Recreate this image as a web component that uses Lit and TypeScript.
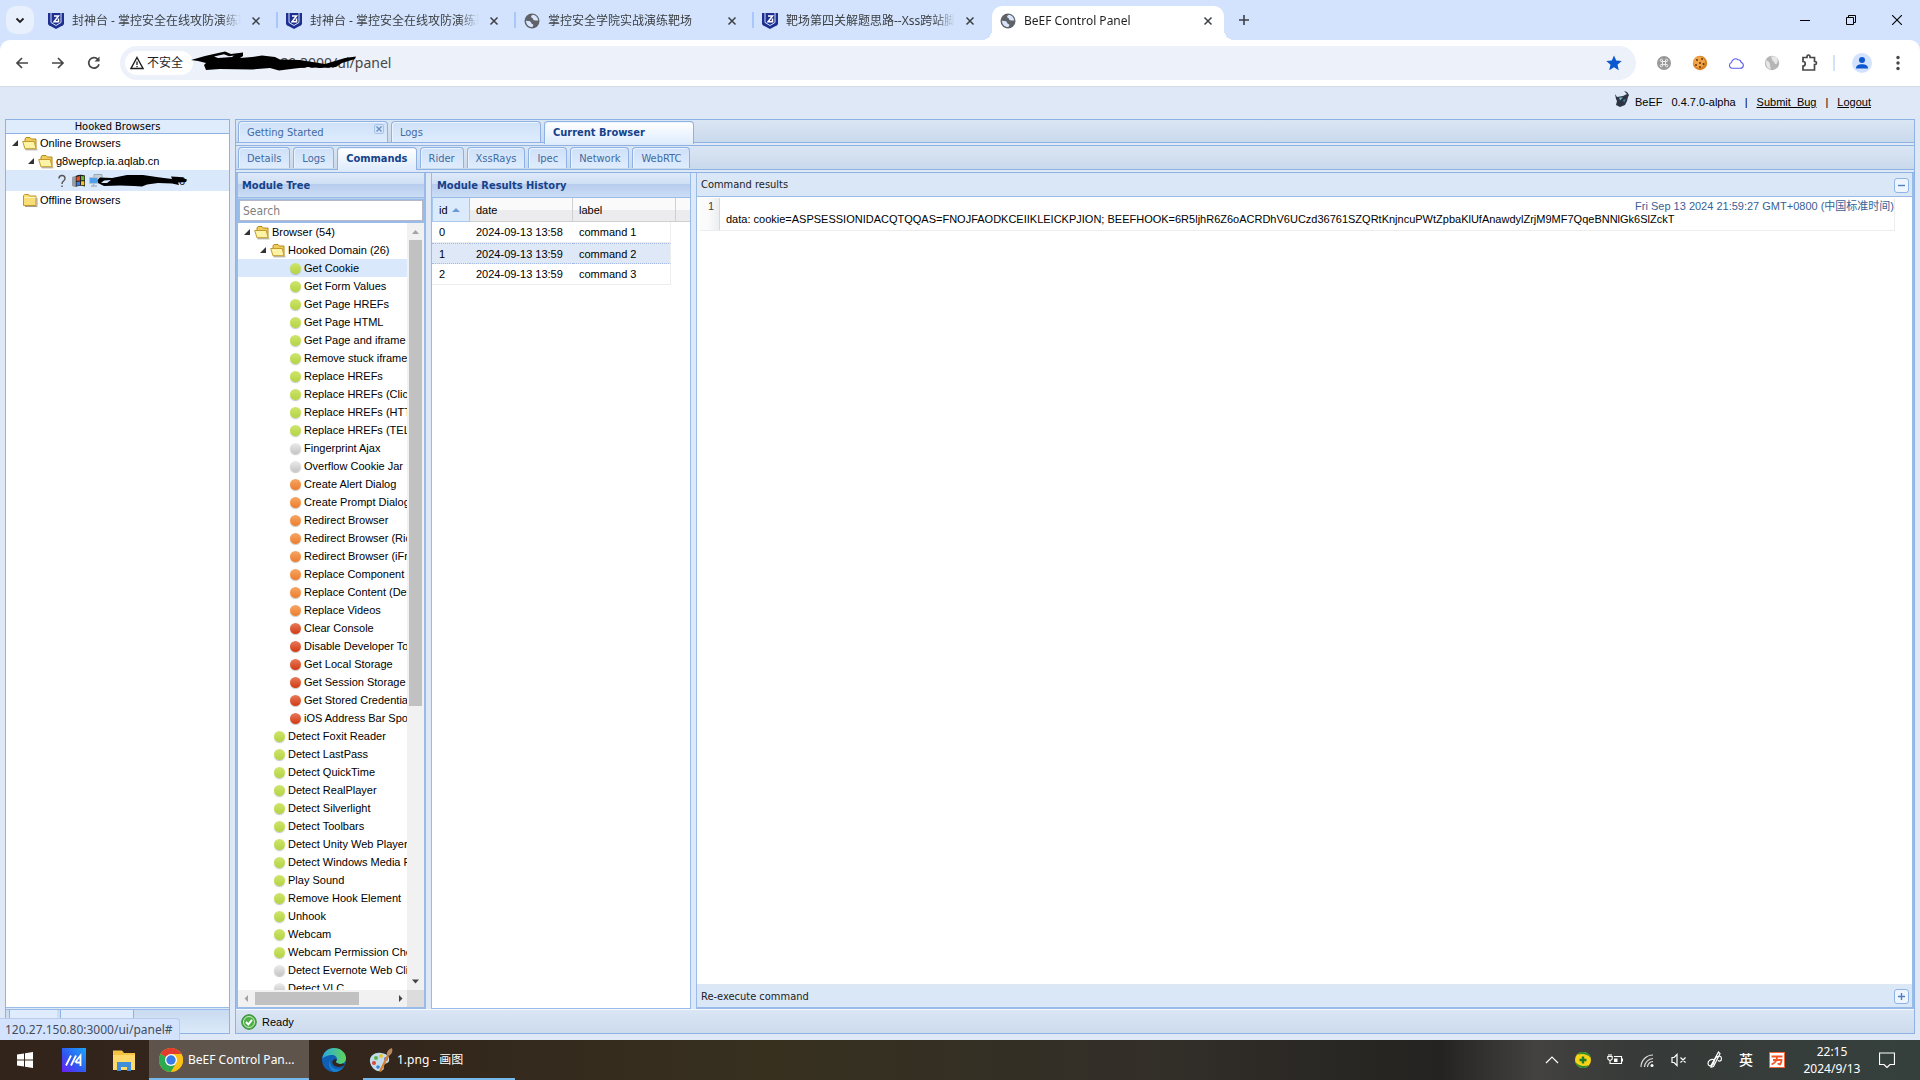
import { LitElement, html, css, svg } from "lit";
import { customElement, state } from "lit/decorators.js";
import { classMap } from "lit/directives/class-map.js";

type Kind = "green" | "grey" | "orange" | "red";

const leaf = (kind: Kind, names: string[]) => names.map((name) => ({ kind, name }));

const HOOKED_DOMAIN = [
  ...leaf("green", [
    "Get Cookie", "Get Form Values", "Get Page HREFs", "Get Page HTML", "Get Page and iframe HTML",
    "Remove stuck iframes", "Replace HREFs", "Replace HREFs (Click Events)", "Replace HREFs (HTTPS)", "Replace HREFs (TEL)",
  ]),
  ...leaf("grey", ["Fingerprint Ajax", "Overflow Cookie Jar"]),
  ...leaf("orange", [
    "Create Alert Dialog", "Create Prompt Dialog", "Redirect Browser", "Redirect Browser (Rickroll)",
    "Redirect Browser (iFrame)", "Replace Component", "Replace Content (Deface)", "Replace Videos",
  ]),
  ...leaf("red", [
    "Clear Console", "Disable Developer Tools", "Get Local Storage", "Get Session Storage",
    "Get Stored Credentials", "iOS Address Bar Spoofing",
  ]),
];

const BROWSER_MODULES = [
  ...leaf("green", [
    "Detect Foxit Reader", "Detect LastPass", "Detect QuickTime", "Detect RealPlayer", "Detect Silverlight",
    "Detect Toolbars", "Detect Unity Web Player", "Detect Windows Media Player", "Play Sound",
    "Remove Hook Element", "Unhook", "Webcam", "Webcam Permission Check",
  ]),
  ...leaf("grey", ["Detect Evernote Web Clipper", "Detect VLC"]),
];

const HISTORY = [
  { id: 0, date: "2024-09-13 13:58", label: "command 1" },
  { id: 1, date: "2024-09-13 13:59", label: "command 2" },
  { id: 2, date: "2024-09-13 13:59", label: "command 3" },
];

const SUB_TABS = ["Details", "Logs", "Commands", "Rider", "XssRays", "Ipec", "Network", "WebRTC"];

const icon = (size: number, body: unknown, box = size) =>
  html`<svg class="icon" width=${size} height=${size} viewBox="0 0 ${box} ${box}" aria-hidden="true">${body}</svg>`;

const shield = icon(16, svg`
  <path d="M0 0h16v10.500q0 1-1 1.700L8 16l-7-3.800Q0 11.500 0 10.500z" fill="#1e2f8f"/>
  <path d="M3 0v9.500l5 3 5-3V0" fill="none" stroke="#d3e3fd" stroke-width="1"/>
  <path d="M6 3h4.500L6 8.800h4.500V5.500" fill="none" stroke="#fff" stroke-width="1.500"/>`);
const globe = icon(16, svg`
  <circle cx="8" cy="8" r="7.500" fill="#5f6368"/>
  <path d="M9.200 1.800C6.500 2.500 6.800 4.500 8.200 5c1.500.4.300 2 1.800 2.300 1.500.3 3 .2 4.200.2C14 4.800 12 2.200 9.200 1.800zM2 7.500c1.500.8 4 .3 4.800 1.500.6 1 .7 2 2 2.200 1 .2.500 1.800-.5 2.900C4.500 14.200 2 11.500 2 7.500z" fill="#d9e5fb"/>`);
const cross = icon(10, svg`<path d="M1.500 1.500l7 7m0-7l-7 7" stroke="#3c4043" stroke-width="1.500"/>`);
const folderOpen = icon(16, svg`
  <path d="M3 12.500V4l1-1.500h4L9.500 4H14v9.500H4z" fill="#f0cd5a" stroke="#b58a1c"/>
  <path d="M.7 6.500h11.500l2 7.300H3z" fill="#fdf3a6" stroke="#c39a2c"/>
  <path d="M3.500 14.800h12" stroke="#a79f8c"/>`);
const folder = icon(16, svg`
  <path d="M1.500 3.500l1-1h4l1 1.500h6.500v9.500H1.500z" fill="#f9de76" stroke="#c1962a"/>
  <path d="M2.500 5.500h11" stroke="#fff6c0"/><path d="M3 14.500h12V6" stroke="#a79f8c" fill="none"/>`);
const arrow = icon(16, svg`<path d="M12 5v6H6z" fill="#333"/>`);

@customElement("app-root")
export class AppRoot extends LitElement {
  @state() private subTab = "Commands";
  @state() private selectedRow = 1;
  @state() private selectedModule = "Get Cookie";

  static styles = css`
    :host {
      display: flex; flex-direction: column; height: 100vh; overflow: hidden;
      background: #dfe8f6; color: #000;
      font: 11px/18px "Liberation Sans", Arial, "Noto Sans CJK SC", sans-serif;
    }
    * { box-sizing: border-box; }
    button, input { font: inherit; color: inherit; border: 0; padding: 0; margin: 0; background: none; }
    a { color: inherit; }
    svg { display: block; flex: none; }
    ul { list-style: none; margin: 0; padding: 0; }
    .grow { flex: 1; min-width: 0; }

    .ui { font-family: "Noto Sans", "Noto Sans CJK SC", sans-serif; }
    .tabstrip { display: flex; height: 40px; background: #d3e3fd; font-size: 12px; padding: 6px 0 0 6px; color: #3c4043; }
    .tabsearch { width: 28px; height: 28px; border-radius: 10px; background: #e9f0fd; display: grid; place-items: center; margin-right: 6px; }
    .btab { display: flex; align-items: center; width: 238px; height: 34px; padding: 0 17px 5px 8px; position: relative; }
    .btab .title { flex: 1; min-width: 0; margin: 0 10px 0 8px; overflow: hidden; white-space: nowrap; text-align: left; line-height: 20px;
      -webkit-mask: linear-gradient(to right, #000 88%, transparent); mask: linear-gradient(to right, #000 88%, transparent); }
    .btab.line::after { content: ""; position: absolute; right: 0; top: 6px; height: 16px; width: 2px; background: #a8c7fa; }
    .btab.active { width: 232px; padding-right: 11px; background: #fff; border-radius: 10px 10px 0 0; color: #1f1f1f; }
    .btab.active::before, .btab.active::after { content: ""; position: absolute; bottom: 0; width: 10px; height: 10px; }
    .btab.active::before { left: -10px; background: radial-gradient(circle at 0 0, transparent 10px, #fff 10px); }
    .btab.active::after { right: -10px; background: radial-gradient(circle at 100% 0, transparent 10px, #fff 10px); }
    .newtab { width: 36px; height: 28px; display: grid; place-items: center; margin-left: 2px; }
    .win { width: 46px; height: 28px; display: grid; place-items: center; }

    .toolbar { display: flex; align-items: center; height: 47px; background: #fff; border-bottom: 1px solid #d5dbe4; padding: 0 14px; border-radius: 10px 10px 0 0; }
    .corner { background: #d3e3fd; }
    .nav { display: flex; gap: 20px; margin-right: 18px; }
    .nav button { width: 16px; height: 16px; }
    .omni { display: flex; align-items: center; height: 34px; border-radius: 17px; background: #ecf1fa; padding: 0 14px 0 5px; position: relative; }
    .chip { display: flex; align-items: center; gap: 3px; height: 24px; width: 68px; border-radius: 12px; background: #fff; padding-left: 5px; font-size: 12px; color: #1f1f1f; }
    .url { flex: 1; min-width: 0; margin-left: 12px; font-size: 14px; color: #474747; }
    .scrub { position: absolute; left: 70px; top: 4px; }
    .exts { display: flex; align-items: center; gap: 20px; margin-left: 20px; }
    .bar { width: 2px; height: 16px; background: #d3e3fd; margin-left: -5px; }
    .exts .me { margin: 0 -2px 0 -3px; }

    .beef { display: flex; justify-content: flex-end; height: 32px; padding: 0 49px 2px 0; align-items: center; gap: 9px; }
    .beef svg { margin-bottom: 6px; margin-right: -4px; }

    .work { flex: 1; min-height: 0; display: flex; gap: 5px; padding: 0 5px 6px 5px; }
    .side { width: 225px; display: flex; flex-direction: column; border: 1px solid #8db2e3; background: #fff; }
    .side h2 { margin: 0; height: 14px; line-height: 14px; font-size: 11px; font-weight: 400; text-align: center; background: #dfecfb; border-bottom: 1px solid #8db2e3; }
    .side .tree { flex: 1; }
    .sidefoot { height: 26px; display: flex; background: linear-gradient(#c9dbf1, #dbe9f9); border-top: 3px double #99bbe8; }
    .sidefoot span { background: #deecfd; border-left: 1px solid #8db2e3; margin-left: 3px; }
    .sidefoot span:first-child { width: 48px; }
    .sidefoot span:last-child { width: 74px; border-right: 1px solid #8db2e3; }

    .row { display: flex; align-items: center; height: 18px; white-space: nowrap; cursor: pointer; }
    .row.on { background: #d9e8fb; }
    .row.host { height: 21px; padding-left: 48px; position: relative; gap: 1px; }
    .row span { margin-left: 2px; }
    .row .dot { flex: none; width: 11px; height: 11px; margin: 1px 1px 0 4px; border-radius: 50%; box-shadow: 0 1px 1px rgba(0, 0, 0, .22); }
    .green { background: linear-gradient(#cfe56b, #b3d443); }
    .grey { background: linear-gradient(#ebebeb, #c4c4c4); }
    .orange { background: linear-gradient(#f7a763, #ec7c2c); }
    .red { background: linear-gradient(#e87a5a, #d13a12); }
    .l2 { padding-left: 16px; } .l2leaf { padding-left: 32px; } .l3 { padding-left: 48px; }
    .l0leaf { padding-left: 16px; }
    .scrub2 { position: absolute; left: 91px; top: 4px; }
    .host .tail { margin-left: 74px; }

    .main { flex: 1; min-width: 0; display: flex; flex-direction: column; border: 1px solid #8db2e3; }
    .tabs { display: flex; gap: 3px; height: 23px; padding: 1px 2px 0; background: linear-gradient(#dbe6f4, #c9d9ec); border-bottom: 1px solid #8db2e3; }
    .tabs.sub { margin-top: 2px; height: 25px; border-top: 1px solid #8db2e3; }
    .tahoma { font-family: Tahoma, "DejaVu Sans Condensed", "Noto Sans", sans-serif; font-size: 11px; }
    .tab { display: flex; justify-content: space-between; height: 21px; line-height: 22px; padding: 0 8px; color: #416aa3; white-space: nowrap; cursor: pointer;
      border: 1px solid #8db2e3; border-bottom: 0; border-radius: 4px 4px 0 0; background: linear-gradient(#cfe1f8, #deecfd); box-shadow: inset 1px 1px 0 #eaf3fe; }
    .top .tab { width: 150px; }
    .tab.sel { height: 23px; color: #15428b; font-weight: 700; background: linear-gradient(#fff, #deecfd); }
    .tabclose { width: 10px; height: 10px; margin: 2px -5px 0 0; border: 1px solid #a8c3e8; border-radius: 2px; display: grid; place-items: center; }

    .cols { flex: 1; min-height: 0; display: flex; margin-top: 2px; border-top: 1px solid #8db2e3; }
    .panel { display: flex; flex-direction: column; border: 1px solid #99bbe8; border-top: 0; background: #fff; min-width: 0; min-height: 0; }
    .panel h2 { margin: 0; height: 25px; line-height: 26px; padding-left: 5px; font-size: 11px; font-weight: 700; color: #15428b;
      border-bottom: 1px solid #99bbe8; background: linear-gradient(#dfeaf9 0, #cfdff4 46%, #b8cdee 48%, #cbdef6 100%); }
    .modules { width: 190px; border-width: 0 2px 2px; margin-right: 5px; }
    .modules h2 { padding-left: 4px; }
    .find { width: 100%; height: 25px; background: #99bbe8; border-top: 1px solid #b8cfee; padding: 1px 1px 3px 1px; }
    .find input { display: block; width: 100%; height: 21px; padding: 0 3px; font-size: 12px; background: #fff; border: 1px solid #b5b8c8; }
    .find input::placeholder { color: #808080; opacity: 1; }
    .scrollarea { flex: 1; min-height: 0; display: grid; grid-template: minmax(0, 1fr) 17px / minmax(0, 1fr) 17px; }
    .scrollarea .tree { overflow: hidden; }
    .vbar { background: #f1f1f1; display: flex; flex-direction: column; align-items: center; }
    .vbar .thumb { width: 13px; height: 466px; background: #c1c1c1; }
    .hbar { background: #f1f1f1; display: flex; align-items: center; }
    .hbar .thumb { height: 13px; width: 104px; background: #c1c1c1; }
    .nook { background: #dcdcdc; }

    .history { width: 260px; margin-right: 5px; }
    table { border-collapse: separate; border-spacing: 0; table-layout: fixed; }
    .fill { width: 14px; }
    th { height: 24px; text-align: left; font-weight: 400; padding: 0 6px; border-right: 1px solid #d0d0d0; border-bottom: 1px solid #d0d0d0; }
    th:last-child { border-right: 0; }
    thead tr { background: linear-gradient(#fafafa 48%, #ececee 52%); }
    th.sorted { background: #dcebfc; border: 1px solid #a9c8ee; border-top: 0; padding-left: 6px; }
    th .s { display: inline-block; border: 4px solid transparent; border-top: 0; border-bottom-color: #6a9bd8; margin-left: 4px; vertical-align: 2px; }
    td { height: 21px; padding: 0 6px; border-bottom: 1px solid #ededed; line-height: 18px; white-space: nowrap; }
    td:first-child { padding-left: 7px; }
    tr.on td { background: #dfe8f6; border-top: 1px dotted #a3bae9; border-bottom: 1px dotted #a3bae9; }
    tbody td:nth-child(3) { border-right: 1px solid #ededed; }
    tbody td.pad { background: #fff; border: 0; padding: 0; }
    .c0 { width: 38px; } .c1 { width: 103px; } .c2 { width: 98px; } .c3 { width: 5px; } .c4 { width: 14px; }

    .results { flex: 1; border-width: 0 2px 2px 1px; }
    .cap { display: flex; align-items: center; height: 24px; padding: 1px 3px 0 4px; background: #dae7f6; color: #222; border-bottom: 1px solid #99bbe8; }
    .cap.foot { border-bottom: 0; border-top: 1px solid #dfe8f2; height: 23px; }
    .tool { width: 15px; height: 15px; border: 1px solid #8fb4e6; border-radius: 3px; background: #eef5fe; display: grid; place-items: center; }
    .out { flex: 1; padding: 1px 17px 0 3px; }
    .outrow { display: flex; height: 33px; border-bottom: 1px solid #ededed; border-right: 1px solid #ededed; }
    .num { width: 20px; padding-right: 5px; text-align: right; color: #444; background: linear-gradient(to right, #fbfbfb 40%, #eceef0); border-right: 1px solid #d8d8d8; line-height: 16px; }
    .body { flex: 1; min-width: 0; padding-left: 6px; display: flex; flex-direction: column; }
    .when { align-self: flex-end; line-height: 16px; color: #385f95; }
    .data { line-height: 11px; white-space: nowrap; }
    .ready { display: flex; align-items: center; gap: 5px; height: 24px; padding-left: 5px; border-top: 1px solid #f4f8fd; background: linear-gradient(#dae6f4, #cddbee); }

    .link { position: absolute; left: 0; bottom: 40px; height: 22px; line-height: 22px; padding: 0 6px 0 5px; font-size: 12px; color: #444d5c; background: #d3e3fd; border: 1px solid #b9cbe8; border-left: 0; border-bottom: 0; border-radius: 0 4px 0 0; }

    .task { display: flex; align-items: center; height: 40px; color: #fff; font-size: 12px;
      background: linear-gradient(to right, #33241b 0, #33261c 20%, #37301f 40%, #332f29 60%, #242321 75%, #434241 80%, #373a38 85%, #35403d 100%); }
    .task button { display: flex; align-items: center; justify-content: center; height: 40px; color: #fff; }
    .task .w { width: 50px; }
    .task .w:first-child { width: 49px; }
    .task .app { justify-content: flex-start; gap: 5px; white-space: nowrap; border-bottom: 2px solid #76b9ed; border-top: 2px solid transparent; }
    .task .chrome { width: 160px; padding-left: 10px; background: #5f544c; border-top-color: #5f544c; }
    .task .paint { width: 152px; padding-left: 6px; gap: 4px; margin-left: 4px; }
    .tray { display: flex; align-items: center; gap: 14px; margin-left: auto; padding-right: 25px; }
    .trayicons { display: flex; align-items: center; gap: 16px; margin-right: 4px; }
    .ime { font-size: 14px; width: 16px; font-weight: 500; }
    .clock { width: 66px; text-align: center; line-height: 17px; white-space: nowrap; }
  `;

  private leafRow(item: { kind: Kind; name: string }, level: string) {
    return html`<li class=${classMap({ row: true, [level]: true, on: item.name === this.selectedModule })}
      @click=${() => (this.selectedModule = item.name)}><i class="dot ${item.kind}"></i><span>${item.name}</span></li>`;
  }

  private browserTab(fav: unknown, title: string, kind = "") {
    return html`<div class="btab ${kind}">${fav}<span class="title">${title}</span>
      <button aria-label="Close tab">${cross}</button></div>`;
  }

  private chromeBar() {
    return html`
      <header class="ui">
        <div class="tabstrip">
          <button class="tabsearch" aria-label="Search tabs">${icon(10, svg`<path d="M1.500 3.500L5 7l3.500-3.500" fill="none" stroke="#1f1f1f" stroke-width="1.800"/>`)}</button>
          ${this.browserTab(shield, "封神台 - 掌控安全在线攻防演练靶场", "line")}
          ${this.browserTab(shield, "封神台 - 掌控安全在线攻防演练靶场", "line")}
          ${this.browserTab(globe, "掌控安全学院实战演练靶场", "line")}
          ${this.browserTab(shield, "靶场第四关解题思路--Xss跨站脚本攻击")}
          ${this.browserTab(globe, "BeEF Control Panel", "active")}
          <button class="newtab" aria-label="New tab">${icon(12, svg`<path d="M6 1v10M1 6h10" stroke="#3c4043" stroke-width="1.600"/>`)}</button>
          <div class="grow"></div>
          <button class="win" aria-label="Minimize">${icon(10, svg`<path d="M0 5.500h10" stroke="#000"/>`)}</button>
          <button class="win" aria-label="Restore">${icon(10, svg`<path d="M.5 2.500h7v7h-7zM2.500 2.500v-2h7v7h-2" fill="none" stroke="#000"/>`)}</button>
          <button class="win" aria-label="Close">${icon(10, svg`<path d="M0 0l10 10M10 0L0 10" stroke="#000" stroke-width="1.100"/>`)}</button>
        </div>
        <div class="corner"><div class="toolbar">
          <nav class="nav">
            <button aria-label="Back">${icon(16, svg`<path d="M14 8H3M8 3L3 8l5 5" fill="none" stroke="#474747" stroke-width="1.700"/>`)}</button>
            <button aria-label="Forward">${icon(16, svg`<path d="M2 8h11M8 3l5 5-5 5" fill="none" stroke="#474747" stroke-width="1.700"/>`)}</button>
            <button aria-label="Reload">${icon(16, svg`<path d="M13 9.200A5.200 5.200 0 1 1 11.800 4.400L13 5.800" fill="none" stroke="#474747" stroke-width="1.700"/><path d="M13.500 1.500v5h-5z" fill="#474747"/>`)}</button>
          </nav>
          <div class="omni grow">
            <div class="chip">${icon(14, svg`<path d="M7 1.500L13 12.500H1z" fill="none" stroke="#1f1f1f" stroke-width="1.400"/><path d="M7 5.500v3.500M7 10v1.300" stroke="#1f1f1f" stroke-width="1.300"/>`)}不安全</div>
            <input class="url" aria-label="Address" .value=${"120.27.150.80:3000/ui/panel"} />
            <svg class="scrub" width="170" height="24" viewBox="190 50 170 24" aria-hidden="true">
              <path d="M191 60L205 56 225 51.500 231 54 243 52.500V56L240 58 252 57 262 55.500 275 57 280 59.500 300 60 325 64 345 58 356 56.500 355 59 342 63 336 67 320 68 308 67 295 68.500 279 70.500 270 68 252 69.500 220 69 206 70 204 65 206 63 198 61z" fill="#000"/>
              <path d="M214 56.500l10-2.300 5 2 5-.7-2 1.500-14 1z" fill="#ecf1fa"/>
            </svg>
            ${icon(16, svg`<path d="M8 .5l2.200 5.100 5.500.5-4.200 3.600 1.300 5.500L8 12.300l-4.800 2.900 1.300-5.500L.3 6.100l5.500-.5z" fill="#0b57d0"/>`)}
          </div>
          <div class="exts">
            ${icon(16, svg`<circle cx="8" cy="8" r="7" fill="#999"/><path d="M6.500 6.500h3v3h-3zM6.500 6.500H5A1.200 1.200 0 1 1 6.500 5zM9.500 6.500V5A1.200 1.200 0 1 1 11 6.500zM9.500 9.500H11A1.200 1.200 0 1 1 9.500 11zM6.500 9.500V11A1.200 1.200 0 1 1 5 9.500z" fill="none" stroke="#eee"/>`)}
            ${icon(16, svg`<circle cx="8" cy="8" r="7.200" fill="#d98021"/><circle cx="7" cy="7" r="5.800" fill="#f0a646"/><g fill="#6b3410"><circle cx="5" cy="5" r="1"/><circle cx="10" cy="4" r="1"/><circle cx="8" cy="8" r="1"/><circle cx="4" cy="10" r="1"/><circle cx="11.500" cy="9" r="1"/><circle cx="8" cy="12" r="1"/></g>`)}
            ${icon(16, svg`<path d="M4 13.300h8.500a3 3 0 0 0 .6-5.900A3 3 0 0 0 10 4.700 4 4 0 0 0 3.500 7.500 3 3 0 0 0 4 13.300z" fill="none" stroke="#5b5bf0" stroke-width="1.100"/>`)}
            ${icon(16, svg`<circle cx="8" cy="8" r="7.200" fill="#b5b5b5"/><path d="M6 2c3 0 1 3 3 4s1 3 3 3 2-4 1-6-4-2-7-1zM2 5c2 1 5 3 4 6l1 3C3 14 1 9 2 5z" fill="#e6e6e6"/>`)}
            ${icon(18, svg`<path d="M3 3.500h4V2.500a1.500 1.500 0 0 1 3 0v1h4.500v4h.5a1.500 1.500 0 0 1 0 3h-.5v5.500H3v-4a2 2 0 0 0 0-4.500z" fill="none" stroke="#474747" stroke-width="1.700"/>`)}
            <div class="bar"></div>
            <button class="me" aria-label="Profile">${icon(20, svg`<circle cx="10" cy="10" r="10" fill="#d3e3fd"/><circle cx="10" cy="7" r="3" fill="#0b57d0"/><path d="M4 15.500c0-3 2.500-4.300 6-4.300s6 1.300 6 4.300z" fill="#0b57d0"/>`)}</button>
            <button aria-label="Menu">${icon(16, svg`<g fill="#474747"><circle cx="8" cy="2.500" r="1.700"/><circle cx="8" cy="8" r="1.700"/><circle cx="8" cy="13.500" r="1.700"/></g>`)}</button>
          </div>
        </div></div>
      </header>`;
  }

  private sidebar() {
    return html`
      <aside class="side">
        <h2 class="tahoma">Hooked Browsers</h2>
        <ul class="tree">
          <li class="row">${arrow}${folderOpen}<span>Online Browsers</span></li>
          <li class="row l2">${arrow}${folderOpen}<span>g8wepfcp.ia.aqlab.cn</span></li>
          <li class="row host on">
            ${icon(16, svg`<path d="M5 5.500Q5 2.500 8 2.500T11 5.500Q11 7 9 8.500 8 9.300 8 11M8 12.500v1.600" fill="none" stroke="#555" stroke-width="1.400"/>`)}
            ${icon(16, svg`<path d="M1 4l3-1v11l-3-1z" fill="#555" opacity=".5"/><path d="M4.500 3Q9 1 14 2.500v11Q9 12 4.500 14z" fill="#222"/><path d="M5.500 4l3.500-1v4.500l-3.500.5z" fill="#e2502a"/><path d="M10 3l3.300.2v4H10z" fill="#6fb33c"/><path d="M5.500 9l3.500-.5v3.700l-3.500.6z" fill="#3f7fd6"/><path d="M10 8.300h3.300v4L10 12z" fill="#f2c230"/>`)}
            ${icon(16, svg`<path d="M6 1.500h8v8H6z" fill="#c7cfd8" stroke="#9aa7b5"/><path d="M1.500 4.500h8v6h-8z" fill="#4fa0ea" stroke="#b4c3d3"/><path d="M3 13h6M5.500 11v2" stroke="#a6b4c2" stroke-width="1.500"/>`)}
            <span class="tail">6</span>
            <svg class="scrub2" width="92" height="14" viewBox="97 175 92 14" aria-hidden="true">
              <path d="M104 187L98 184 97.500 181 100 178.500 112 179 127 176 143 176 160 178.500 172 180 171 177.500 180 178 187 180.500 186 183 178 183.500 179 186 172 184.500 158 184 147 185.500 142 187.500 134 187 120 186.500z" fill="#000"/>
              <path d="M101 184l3-2.500 7-.5-4 3z" fill="#d9e8fb"/>
            </svg>
          </li>
          <li class="row l0leaf">${folder}<span>Offline Browsers</span></li>
        </ul>
        <div class="sidefoot"><span></span><span></span></div>
      </aside>`;
  }

  private modules() {
    return html`
      <section class="panel modules">
        <h2 class="tahoma">Module Tree</h2>
        <div class="find tahoma"><input type="text" placeholder="Search" aria-label="Search modules" /></div>
        <div class="scrollarea">
          <ul class="tree">
            <li class="row">${arrow}${folderOpen}<span>Browser (54)</span></li>
            <li class="row l2">${arrow}${folderOpen}<span>Hooked Domain (26)</span></li>
            ${HOOKED_DOMAIN.map((m) => this.leafRow(m, "l3"))}
            ${BROWSER_MODULES.map((m) => this.leafRow(m, "l2leaf"))}
          </ul>
          <div class="vbar">
            ${icon(17, svg`<path d="M5 11h7L8.500 7z" fill="#a3a3a3"/>`)}
            <div class="thumb"></div><div class="grow"></div>
            ${icon(17, svg`<path d="M5 6.500h7l-3.500 4z" fill="#444"/>`)}
          </div>
          <div class="hbar">
            ${icon(17, svg`<path d="M10 5v7L6.500 8.500z" fill="#a3a3a3"/>`)}
            <div class="thumb"></div><div class="grow"></div>
            ${icon(17, svg`<path d="M9 5v7l3.500-3.500z" fill="#444"/>`)}
          </div>
          <div class="nook"></div>
        </div>
      </section>`;
  }

  private history() {
    return html`
      <section class="panel history">
        <h2 class="tahoma">Module Results History</h2>
        <table>
          <colgroup><col class="c0" /><col class="c1" /><col class="c2" /><col class="c3" /><col class="c4" /></colgroup>
          <thead><tr><th class="sorted">id<i class="s"></i></th><th>date</th><th colspan="2">label</th><th></th></tr></thead>
          <tbody>
            ${HISTORY.map((r, i) => html`
              <tr class=${i === this.selectedRow ? "on" : ""} @click=${() => (this.selectedRow = i)}>
                <td>${r.id}</td><td>${r.date}</td><td>${r.label}</td><td class="pad" colspan="2"></td>
              </tr>`)}
          </tbody>
        </table>
      </section>`;
  }

  private results() {
    return html`
      <section class="panel results">
        <div class="cap tahoma"><span class="grow">Command results</span>
          <button class="tool" aria-label="Collapse">${icon(7, svg`<path d="M0 3.500h7" stroke="#4f7fc0" stroke-width="1.400"/>`)}</button></div>
        <div class="out">
          <div class="outrow">
            <div class="num">1</div>
            <div class="body">
              <time class="when">Fri Sep 13 2024 21:59:27 GMT+0800 (中国标准时间)</time>
              <div class="data">data: cookie=ASPSESSIONIDACQTQQAS=FNOJFAODKCEIIKLEICKPJION; BEEFHOOK=6R5ljhR6Z6oACRDhV6UCzd36761SZQRtKnjncuPWtZpbaKlUfAnawdylZrjM9MF7QqeBNNlGk6SlZckT</div>
            </div>
          </div>
        </div>
        <div class="cap foot tahoma"><span class="grow">Re-execute command</span>
          <button class="tool" aria-label="Expand">${icon(7, svg`<path d="M0 3.500h7M3.500 0v7" stroke="#4f7fc0" stroke-width="1.400"/>`)}</button></div>
      </section>`;
  }

  private taskbar() {
    return html`
      <footer class="task ui">
        <button class="w" aria-label="Start">${icon(16, svg`<path d="M0 2.500L7 1.500v6H0zM8 1.300L16 0v7.500H8zM0 8.500h7v6l-7-1zM8 8.500h8V16l-8-1.200z" fill="#fff"/>`)}</button>
        <button class="w" aria-label="MyASUS">${icon(24, svg`
          <defs><linearGradient id="asus" x1="0" y1="1" x2="1" y2="0"><stop offset="0" stop-color="#6a1cf5"/><stop offset=".45" stop-color="#2f5bf0"/><stop offset="1" stop-color="#18a6fb"/></linearGradient></defs>
          <path d="M0 0h24v24H0z" fill="url(#asus)"/><path d="M4 17.500L9 7.500M9 17.500L14 7.500M13 14.500l5.500-7v10.500M14 14.500h4.500" fill="none" stroke="#fff" stroke-width="1.800"/>`)}</button>
        <button class="w" aria-label="File Explorer">${icon(24, svg`<path d="M1 2.500h9l2 2.500h11v17H1z" fill="#f5c342"/><path d="M1 7h22v15H1z" fill="#ffd96b"/><path d="M5 14h14v9h-4v-4H9v4H5z" fill="#3e8fd8"/>`)}</button>
        <button class="app chrome">${icon(24, svg`
          <circle cx="12" cy="12" r="12" fill="#fbc116"/>
          <path d="M12 12L1.600 6A12 12 0 0 1 22.400 6z" fill="#e33b2e"/>
          <path d="M12 12L1.600 6A12 12 0 0 0 12 24l5.200-9z" fill="#2da94f"/>
          <path d="M12 6h10.400a12 12 0 0 1 0 12L12 24l5.200-9z" fill="#fbc116"/>
          <circle cx="12" cy="12" r="6" fill="#fff"/><circle cx="12" cy="12" r="4.700" fill="#3a7bea"/>`)}BeEF Control Pan...</button>
        <button class="w" aria-label="Edge">${icon(24, svg`
          <defs><linearGradient id="edge" x1="0" y1="0" x2="1" y2="0"><stop offset="0" stop-color="#2aa7e0"/><stop offset="1" stop-color="#5fd65a"/></linearGradient></defs>
          <circle cx="12" cy="12" r="12" fill="#0f5fb3"/>
          <path d="M.2 10.500C1.500 4 6 0 12 0c7 0 12 5 12 10 0 3.500-2.500 6-6 6-2.500 0-4-1-4-2s1-1.200 1-3-2-4-5-4c-4 0-8 2-9.800 3.500z" fill="url(#edge)"/>
          <path d="M8.500 11.500c-2 5 2 9.500 7 10 2.500 0 5-1 6.500-3A12 12 0 0 1 12 24C8 22 5 17 8.500 11.500z" fill="#1b7fd0"/>
          <path d="M14.800 11.500c-.3 1.500-1 1.500-.8 2.500.3 1.500 4 2.500 7 1.500l2 1c-3 3-9.500 3.500-12 0-2-3 .5-6 3.800-5z" fill="#33241b"/>`)}</button>
        <button class="app paint">${icon(24, svg`
          <path d="M1 14C0 8 6 4 12 5c6 .5 9 4 8 8-1 3-4 1.500-5 4s1 4-2 5.500C8 25 2 20 1 14z" fill="#c3dcec"/>
          <circle cx="5" cy="15" r="2" fill="#d64a3a"/><circle cx="7" cy="10" r="2" fill="#5cb24a"/><circle cx="12" cy="8" r="2" fill="#e8c532"/><circle cx="17" cy="11" r="2" fill="#7c60c0"/><circle cx="9" cy="19" r="1.800" fill="#3f83d4"/>
          <path d="M10 23L18 7l2 1-8 16z" fill="#d9822b"/><path d="M18 7c-1-3 2-6 5-7 1 3 0 6-3 8z" fill="#b8885a"/>`)}1.png - 画图</button>
        <div class="tray">
          <div class="trayicons">
            ${icon(14, svg`<path d="M1 10l6-6 6 6" fill="none" stroke="#fff" stroke-width="1.200"/>`)}
            ${icon(16, svg`<circle cx="8" cy="8" r="8" fill="#f7d417"/><path d="M2 2.700A8 8 0 0 1 15.800 6C12 1.500 7 1.500 2 2.700zM14 13.300A8 8 0 0 1 .2 10c3.800 4.500 8.800 4.500 13.800 3.300z" fill="#2e8b34"/><path d="M8 4.500v7M4.500 8h7" stroke="#1d7a28" stroke-width="2.400"/>`)}
            ${icon(16, svg`<path d="M7 4.500h7.500v7H5.500M15.500 6.500v3M.8 4.500h4.400v2.500L3.800 8.300H2.200L.8 7zM2 2v2.500M4 2v2.500M3 8v3.500h3" fill="none" stroke="#fff" stroke-width="1.100"/><path d="M7 6.500h3.500v3.500H7z" fill="#fff"/>`)}
            ${icon(16, svg`<path d="M2 15A12 12 0 0 1 14 3M5.500 15A9 9 0 0 1 14 6.500M8.500 15A6 6 0 0 1 14 9.500" fill="none" stroke="#ddd" stroke-width="1.200"/><circle cx="13" cy="13.500" r="1.500" fill="#fff"/>`)}
            ${icon(16, svg`<path d="M1 5.500h2L6 2.500v11l-3-3H1zM9.500 5.500l5 5M14.500 5.500l-5 5" fill="none" stroke="#fff" stroke-width="1.200"/>`)}
          </div>
          ${icon(20, svg`<path d="M6 15.500L13.500 2l1.500 1.500L8.500 16.500l-2.500.8zM9 9.500c-4-.5-6 1.500-6 4s3.500 3.500 5 1 1-5 3-7 5.500-2 5.500 1-2.500 3-3.500 2" fill="none" stroke="#fff" stroke-width="1.200"/>`)}
          <span class="ime">英</span>
          ${icon(16, svg`<path d="M0 0h16v16H0z" fill="#f4663a"/><path d="M1 1h14v14H1z" fill="#fff"/><path d="M2.500 4.500h11M4 8h8.500c0 2-.5 3.500-1.500 4.500L8.500 11.500M8 5c0 4-2 6-5.500 7.500" fill="none" stroke="#f4562a" stroke-width="1.800"/>`)}
          <div class="clock">22:15<br />2024/9/13</div>
          ${icon(16, svg`<path d="M.5 1h15v11.500H11L8 15.500l-3-3H.5z" fill="none" stroke="#fff" stroke-width="1.200"/>`)}
        </div>
      </footer>`;
  }

  render() {
    return html`
      ${this.chromeBar()}
      <div class="beef">
        ${icon(16, svg`<path d="M3 6L1 3l1 5 1 2-1 4 4 2 5-2 2-4 1-4 1-2-2-3-3-1 3 3-4 2z" fill="#2b3440"/><path d="M5 6.500h4l-3 3z" fill="#7fb6dc"/><path d="M9 9l3-1-2 4z" fill="#4a7697"/>`)}
        <span>BeEF</span><span>0.4.7.0-alpha</span><span>|</span><a href="#bug">Submit&nbsp; Bug</a><span>|</span><a href="#logout">Logout</a>
      </div>
      <div class="work">
        ${this.sidebar()}
        <main class="main">
          <div class="tabs top tahoma">
            <div class="tab"><a>Getting Started</a><button class="tabclose" aria-label="Close">${icon(6, svg`<path d="M.5.5l5 5m0-5l-5 5" stroke="#6b8fc4" stroke-width="1.400"/>`)}</button></div>
            <button class="tab">Logs</button>
            <button class="tab sel">Current Browser</button>
          </div>
          <div class="tabs sub tahoma">
            ${SUB_TABS.map((t) => html`<button class=${classMap({ tab: true, sel: t === this.subTab })} @click=${() => (this.subTab = t)}>${t}</button>`)}
          </div>
          <div class="cols">
            ${this.modules()}${this.history()}${this.results()}
          </div>
          <div class="ready">
            ${icon(16, svg`<circle cx="8" cy="8" r="7.300" fill="#4fae48" stroke="#3a8a38"/><circle cx="8" cy="8" r="5.500" fill="none" stroke="#c6ecc0"/><path d="M5 8l2.300 2.500L11 5.800" fill="none" stroke="#fff" stroke-width="1.900"/>`)}
            <span>Ready</span>
          </div>
        </main>
      </div>
      <div class="link ui">120.27.150.80:3000/ui/panel#</div>
      ${this.taskbar()}
    `;
  }
}
